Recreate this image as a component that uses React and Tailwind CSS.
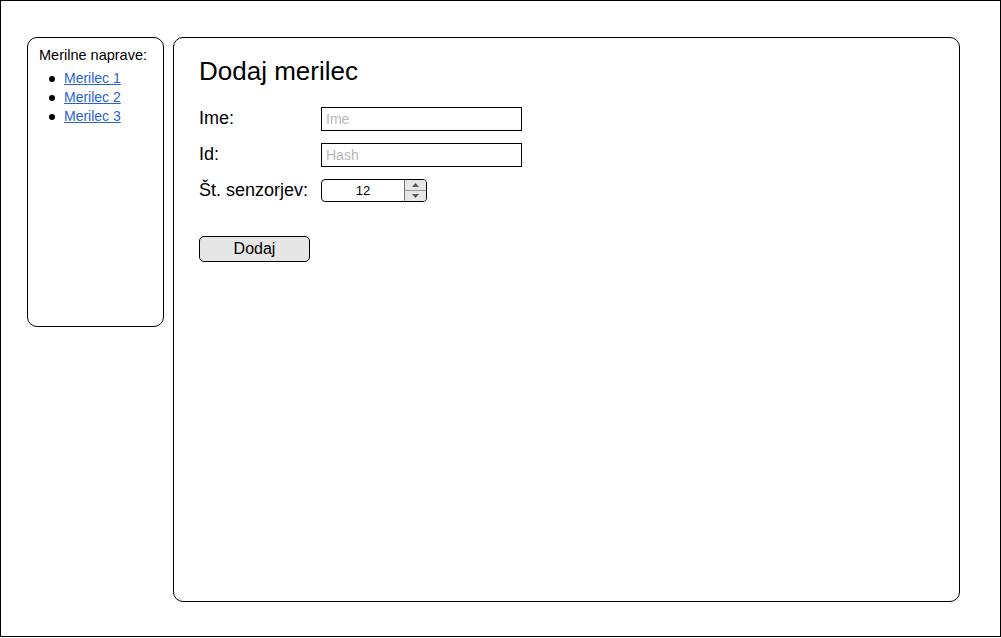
import React from "react";

const font = { fontFamily: '"Liberation Sans", Arial, sans-serif' };

function Field({ label, placeholder }) {
  return (
    <div className="flex items-center h-[24px] mb-[12px]">
      <span className="w-[122px] text-[18px] leading-none text-black -mt-[3px]">{label}</span>
      <input
        placeholder={placeholder}
        className="w-[201px] h-[24px] border border-black px-[4px] text-[14px] text-black placeholder:text-[#b8b8b8] outline-none"
      />
    </div>
  );
}

export default function App() {
  return (
    <div style={font} className="w-[1001px] h-[637px] border border-black bg-white pl-[26px] pt-[36px] flex items-start">
      <aside className="w-[137px] h-[290px] border border-black rounded-[10px] pl-[11px] pt-[9px]">
        <p className="text-[14.5px] leading-[16px] text-black">Merilne naprave:</p>
        <ul className="mt-[6px] ml-[10px] text-[14px] leading-[19px]">
          {["Merilec 1", "Merilec 2", "Merilec 3"].map((m) => (
            <li key={m} className="flex items-center">
              <span className="w-[6px] h-[6px] rounded-full bg-black mr-[9px]" />
              <a href="#" className="text-[#2a62d6] underline">{m}</a>
            </li>
          ))}
        </ul>
      </aside>
      <main className="ml-[9px] w-[787px] h-[565px] border border-black rounded-[10px] pl-[25px] pt-[18px]">
        <h1 className="text-[26px] leading-[30px] text-black mb-[21px]">Dodaj merilec</h1>
        <Field label="Ime:" placeholder="Ime" />
        <Field label="Id:" placeholder="Hash" />
        <div className="flex items-center h-[23px]">
          <span className="w-[122px] text-[18px] leading-none text-black -mt-[2px]">Št. senzorjev:</span>
          <div className="w-[106px] h-[23px] border border-black rounded-[4px] flex overflow-hidden">
            <span className="flex-1 flex items-center justify-center text-[13px] text-black">12</span>
            <div className="w-[22px] border-l border-[#777] flex flex-col bg-[#e6e6e6]">
              <span className="flex-1 flex items-center justify-center border-b border-[#999]">
                <svg width="7" height="4" viewBox="0 0 7 4"><path d="M0 4L3.5 0L7 4Z" fill="#555" /></svg>
              </span>
              <span className="flex-1 flex items-center justify-center">
                <svg width="7" height="4" viewBox="0 0 7 4"><path d="M0 0L3.5 4L7 0Z" fill="#555" /></svg>
              </span>
            </div>
          </div>
        </div>
        <button className="mt-[34px] w-[111px] h-[26px] border border-black rounded-[5px] bg-[#e6e6e6] text-[16px] text-black flex items-center justify-center">
          Dodaj
        </button>
      </main>
    </div>
  );
}
